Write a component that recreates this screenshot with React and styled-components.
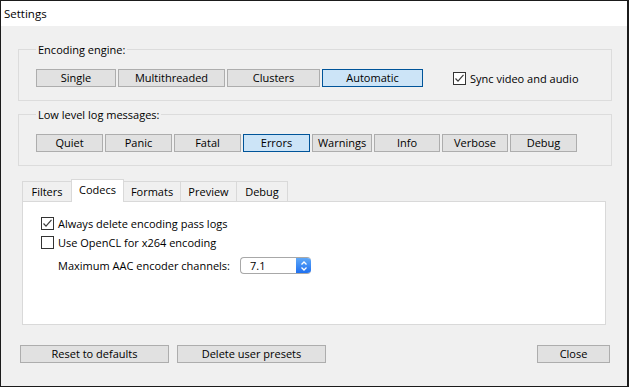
import React from 'react'
import styled, { createGlobalStyle } from 'styled-components'

const GlobalStyle = createGlobalStyle`
  body {
    margin: 0;
    font-family: "Open Sans", "Liberation Sans", sans-serif;
    font-size: 11px;
    color: #000;
  }
`

const Window = styled.div`
  width: 629px;
  height: 387px;
  box-sizing: border-box;
  border: 1px solid #1b1b1b;
  border-right-width: 2px;
  background: #f0f0f0;
  display: flex;
  flex-direction: column;
`

const TitleBar = styled.div`
  height: 25px;
  flex-shrink: 0;
  background: #fff;
  padding-left: 3px;
  display: flex;
  align-items: center;
  font-size: 11.5px;
`

const Body = styled.div`
  flex: 1;
  display: flex;
  flex-direction: column;
  padding: 0 15px 0 17px;
`

const Group = styled.fieldset`
  margin: ${p => p.$top}px 0 0;
  padding: 12px 17px 13px;
  border: 1px solid #dcdcdc;
  min-width: 0;
`

const Legend = styled.legend`
  padding: 0 2px;
  line-height: 15px;
`

const ButtonRow = styled.div`
  display: flex;
  align-items: center;
  gap: 2px;
`

const Button = styled.button`
  width: ${p => p.$w}px;
  height: 18px;
  box-sizing: border-box;
  padding: 0;
  margin: 0;
  font-family: inherit;
  font-size: 11px;
  line-height: 16px;
  color: #000;
  background: ${p => (p.$active ? '#cce4f7' : '#e1e1e1')};
  border: 1px solid ${p => (p.$active ? '#005499' : '#adadad')};
  border-radius: 0;
`

const CheckLabel = styled.label`
  display: flex;
  align-items: center;
  gap: 4px;
  margin-left: ${p => p.$offset || 0}px;
`

const Box = styled.span`
  width: 13px;
  height: 13px;
  box-sizing: border-box;
  border: 1px solid #333;
  background: #fff;
  display: flex;
  align-items: center;
  justify-content: center;
`

const Check = ({ checked }) => (
  <Box>
    {checked && (
      <svg width="11" height="11" viewBox="0 0 11 11">
        <path d="M1.5 5.5 L4 8.2 L9.5 1.8" fill="none" stroke="#3c3c3c" strokeWidth="1.2" />
      </svg>
    )}
  </Box>
)

const TabArea = styled.div`
  margin: 13px 6px 0 4px;
  display: flex;
  flex-direction: column;
`

const TabRow = styled.div`
  display: flex;
  align-items: flex-end;
`

const Tab = styled.div`
  width: ${p => p.$w}px;
  height: ${p => (p.$active ? 23 : 20)}px;
  margin-bottom: ${p => (p.$active ? -1 : 0)}px;
  margin-left: -1px;
  &:first-child { margin-left: 0; }
  box-sizing: border-box;
  border: 1px solid #d9d9d9;
  border-bottom: none;
  background: ${p => (p.$active ? '#fff' : '#f0f0f0')};
  position: relative;
  z-index: ${p => (p.$active ? 1 : 0)};
  display: flex;
  align-items: center;
  justify-content: center;
  padding-bottom: ${p => (p.$active ? 4 : 0)}px;
`

const Panel = styled.div`
  height: 124px;
  box-sizing: border-box;
  background: #fff;
  border: 1px solid #d9d9d9;
  padding: 12px 18px;
  display: flex;
  flex-direction: column;
`

const OptionRow = styled.div`
  height: 19px;
  display: flex;
  align-items: center;
`

const FieldRow = styled.div`
  height: 17px;
  margin: 5px 0 0 17px;
  display: flex;
  align-items: center;
`

const FieldLabel = styled.span`
  width: 182px;
`

const Select = styled.div`
  width: 71px;
  height: 17px;
  box-sizing: border-box;
  border: 1px solid #a8a8a8;
  border-right: none;
  border-radius: 4px;
  background: #fff;
  display: flex;
  overflow: hidden;
`

const SelectValue = styled.span`
  flex: 1;
  padding-left: 9px;
  line-height: 15px;
`

const SelectArrow = styled.span`
  width: 15px;
  background: linear-gradient(#5fa8f8, #1f70f0);
  display: flex;
  align-items: center;
  justify-content: center;
`

const Footer = styled.div`
  margin-top: 20px;
  padding: 0 2px;
  display: flex;
  gap: 8px;
`

const Spacer = styled.div`
  flex: 1;
`

const engines = [
  ['Single', 80],
  ['Multithreaded', 107],
  ['Clusters', 93],
  ['Automatic', 101, true],
]

const levels = [
  ['Quiet', 67],
  ['Panic', 67],
  ['Fatal', 67],
  ['Errors', 67, true],
  ['Warnings', 60],
  ['Info', 66],
  ['Verbose', 66],
  ['Debug', 67],
]

const tabs = [
  ['Filters', 50],
  ['Codecs', 53, true],
  ['Formats', 58],
  ['Preview', 57],
  ['Debug', 52],
]

export default function App() {
  return (
    <>
      <GlobalStyle />
      <Window>
        <TitleBar>Settings</TitleBar>
        <Body>
          <Group $top={16}>
            <Legend>Encoding engine:</Legend>
            <ButtonRow>
              {engines.map(([label, w, active]) => (
                <Button key={label} $w={w} $active={active}>{label}</Button>
              ))}
              <CheckLabel $offset={28}>
                <Check checked />
                Sync video and audio
              </CheckLabel>
            </ButtonRow>
          </Group>

          <Group $top={6}>
            <Legend>Low level log messages:</Legend>
            <ButtonRow>
              {levels.map(([label, w, active]) => (
                <Button key={label} $w={w} $active={active}>{label}</Button>
              ))}
            </ButtonRow>
          </Group>

          <TabArea>
            <TabRow>
              {tabs.map(([label, w, active]) => (
                <Tab key={label} $w={w} $active={active}>{label}</Tab>
              ))}
            </TabRow>
            <Panel>
              <OptionRow>
                <CheckLabel>
                  <Check checked />
                  Always delete encoding pass logs
                </CheckLabel>
              </OptionRow>
              <OptionRow>
                <CheckLabel>
                  <Check />
                  Use OpenCL for x264 encoding
                </CheckLabel>
              </OptionRow>
              <FieldRow>
                <FieldLabel>Maximum AAC encoder channels:</FieldLabel>
                <Select>
                  <SelectValue>7.1</SelectValue>
                  <SelectArrow>
                    <svg width="8" height="12" viewBox="0 0 8 12">
                      <path d="M1.5 4.5 L4 2 L6.5 4.5 M1.5 7.5 L4 10 L6.5 7.5" fill="none" stroke="#fff" strokeWidth="1.3" />
                    </svg>
                  </SelectArrow>
                </Select>
              </FieldRow>
            </Panel>
          </TabArea>

          <Footer>
            <Button $w={149}>Reset to defaults</Button>
            <Button $w={149}>Delete user presets</Button>
            <Spacer />
            <Button $w={73}>Close</Button>
          </Footer>
        </Body>
      </Window>
    </>
  )
}
